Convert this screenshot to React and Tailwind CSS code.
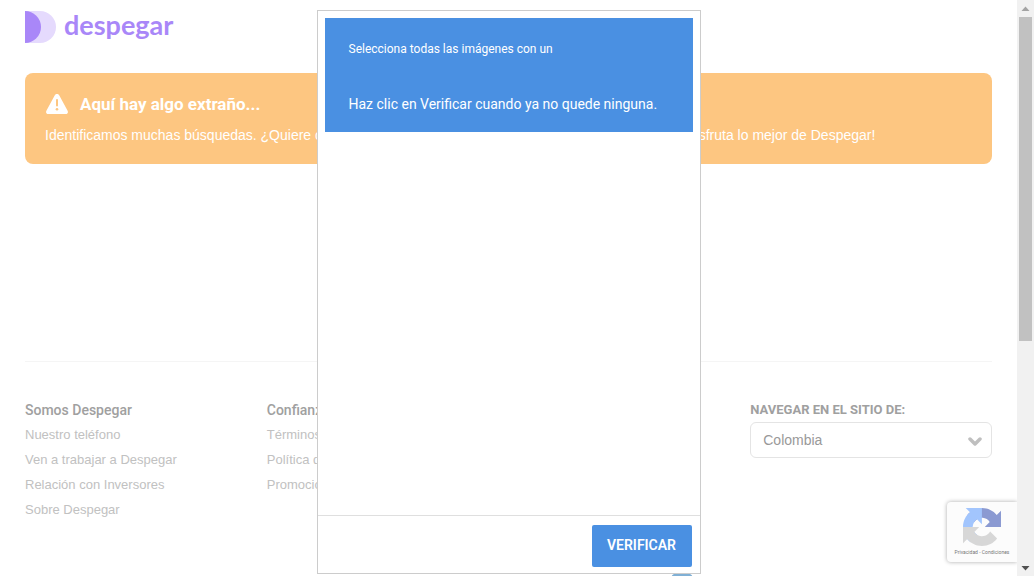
import React from "react";

const columns = [
  {
    title: "Somos Despegar",
    links: ["Nuestro teléfono", "Ven a trabajar a Despegar", "Relación con Inversores", "Sobre Despegar"],
  },
  {
    title: "Confianza y seguridad",
    links: ["Términos y condiciones", "Política de privacidad", "Promociones vigentes"],
  },
];

function Logo() {
  return (
    <a href="#" className="flex items-center gap-2 text-[#a987f8]">
      <svg width="31" height="32" viewBox="0 0 31 32" aria-hidden="true">
        <path d="M0 0h15a16 16 0 0 1 0 32H0z" fill="#e5dafd" />
        <path d="M0 0a16 16 0 0 1 0 32z" fill="#a987f8" />
      </svg>
      <span className="pb-1 font-['Lato',sans-serif] text-[27px] leading-7 font-bold">despegar</span>
    </a>
  );
}

function Warning() {
  return (
    <svg width="22" height="20" viewBox="0 0 22 20" aria-hidden="true">
      <path d="M11 0c1 0 1.700.4 2.200 1.300l8.400 15.400c.9 1.600 0 3.300-1.900 3.300H2.300C.4 20-.5 18.300.4 16.700L8.800 1.300C9.300.4 10 0 11 0z" fill="#fff" />
      <path d="M11 6v5.500" stroke="#fdc681" strokeWidth="2" strokeLinecap="round" />
      <circle cx="11" cy="15.300" r="1.300" fill="#fdc681" />
    </svg>
  );
}

function Recaptcha() {
  return (
    <aside className="absolute right-0 bottom-[14px] flex h-[60px] w-[70px] flex-col items-center rounded-l-sm bg-[#fcfcfc] pt-[6px] shadow-[0_0_4px_#aaaaaa]">
      <svg className="opacity-50" width="38" height="38" viewBox="0 0 64 64" aria-hidden="true">
        <path fill="#1c3aa9" d="M64 31.955l-.033-1.370V4.687l-7.160 7.160C50.948 4.674 42.033.093 32.050.093c-10.400 0-19.622 4.960-25.458 12.640l11.736 11.860a15.550 15.550 0 0 1 4.754-5.334c2.050-1.600 4.952-2.906 8.968-2.906.485 0 .860.057 1.135.163 4.976.393 9.288 3.140 11.828 7.124l-8.307 8.307L64 31.953" />
        <path fill="#4a90ff" d="M31.862.094l-1.370.033H4.594l7.160 7.160C4.580 13.147 0 22.060 0 32.046c0 10.400 4.960 19.622 12.640 25.458L24.500 45.768a15.550 15.550 0 0 1-5.334-4.754c-1.600-2.050-2.906-4.952-2.906-8.968 0-.485.057-.860.163-1.135.393-4.976 3.140-9.288 7.124-11.828l8.307 8.307L31.860.095" />
        <path fill="#b3b3b3" d="M.001 32.045l.033 1.370v25.898l7.160-7.160c5.860 7.173 14.774 11.754 24.760 11.754 10.400 0 19.622-4.960 25.458-12.640l-11.736-11.860a15.550 15.550 0 0 1-4.754 5.334c-2.050 1.600-4.952 2.906-8.968 2.906-.485 0-.860-.057-1.135-.163-4.976-.393-9.288-3.140-11.828-7.124l8.307-8.307-27.297.002" />
      </svg>
      <p className="pt-[2px] font-['Roboto',sans-serif] text-[5px] leading-[8px] whitespace-nowrap text-[#777]">
        <a href="#">Privacidad</a> - <a href="#">Condiciones</a>
      </p>
    </aside>
  );
}

function Challenge() {
  return (
    <div className="absolute inset-0 flex justify-center pt-[10px] pb-[2px]">
      <section role="dialog" aria-label="Verificación" className="flex w-[384px] flex-col border border-[#cccccc] bg-white">
        <header className="m-[7px] mb-0 flex flex-col gap-[35px] bg-[#4a90e2] px-6 pt-[21px] pb-[18px] text-white">
          <p className="text-xs leading-5">Selecciona todas las imágenes con un</p>
          <p className="text-sm leading-5">Haz clic en Verificar cuando ya no quede ninguna.</p>
        </header>
        <div className="flex-1" />
        <footer className="flex justify-end border-t border-[#dfdfdf] px-2 pt-[9px] pb-[6px]">
          <button type="button" className="h-[42px] w-[100px] rounded-xs bg-[#4a90e2] pb-[2px] text-sm font-semibold text-white uppercase">
            Verificar
          </button>
        </footer>
      </section>
    </div>
  );
}

function Scrollbar() {
  return (
    <div aria-hidden="true" className="flex w-[17px] shrink-0 flex-col items-center bg-[#f1f1f1]">
      <svg width="17" height="17" viewBox="0 0 17 17"><path d="M8.500 6.500L12.500 11h-8z" fill="#a3a3a3" /></svg>
      <div className="w-[13px] grow-[324] bg-[#c1c1c1]" />
      <div className="grow-[218]" />
      <svg width="17" height="17" viewBox="0 0 17 17"><path d="M8.500 11.500L12.500 7h-8z" fill="#505050" /></svg>
    </div>
  );
}

export default function App() {
  return (
    <div className="flex h-screen overflow-hidden bg-white font-['Roboto',sans-serif]">
      <div className="relative min-w-0 flex-1 overflow-hidden">
        <div className="px-[25px] pt-[11px]">
          <header className="flex h-[62px] items-start">
            <Logo />
          </header>
          <main className="h-[288px]">
            <section className="h-[91px] rounded-lg bg-[#fdc681] px-5 pt-5 text-white">
              <h1 className="flex items-center gap-3 pl-px text-[17px] leading-[22px] font-bold">
                <Warning />
                Aquí hay algo extraño...
              </h1>
              <p className="pt-[10px] font-['Liberation_Sans',sans-serif] text-[14px] leading-5 whitespace-nowrap">
                Identificamos muchas búsquedas. ¿Quiere continuar? Confirma aquí, por favor que no eres un robot y ¡disfruta lo mejor de Despegar!
              </p>
            </section>
          </main>
          <footer className="border-t border-[#f5f5f5] pt-9">
            <div className="grid grid-cols-4 font-['Liberation_Sans',sans-serif] text-[13px] leading-[25px] text-[#c1c1c1]">
              {columns.map((column) => (
                <nav key={column.title} aria-label={column.title}>
                  <h2 className="font-['Roboto',sans-serif] text-[14px] leading-6 font-medium text-[#a0a0a0]">{column.title}</h2>
                  <ul>
                    {column.links.map((link) => (
                      <li key={link}><a href="#">{link}</a></li>
                    ))}
                  </ul>
                </nav>
              ))}
              <div className="col-start-4">
                <label htmlFor="site" className="block font-['Roboto',sans-serif] text-[13px] leading-6 font-bold text-[#a0a0a0]">NAVEGAR EN EL SITIO DE:</label>
                <div className="grid items-center">
                  <select id="site" className="col-start-1 row-start-1 h-9 w-full appearance-none rounded-md border border-[#e4e4e4] bg-white px-3 font-['Liberation_Sans',sans-serif] text-sm text-[#999]">
                    <option>Colombia</option>
                  </select>
                  <svg className="pointer-events-none col-start-1 row-start-1 mt-1 mr-[10px] justify-self-end" width="14" height="10" viewBox="0 0 14 10" fill="none" stroke="#bfbfbf" strokeWidth="3.500" strokeLinecap="round" strokeLinejoin="round" aria-hidden="true">
                    <path d="M2 2l5 5 5-5" />
                  </svg>
                </div>
              </div>
            </div>
            <div className="flex justify-end pt-[51px] pr-[299px]">
              <span className="h-6 w-[22px] rounded-t-md bg-[#80b0d5]" />
            </div>
          </footer>
        </div>
        <Recaptcha />
        <Challenge />
      </div>
      <Scrollbar />
    </div>
  );
}
